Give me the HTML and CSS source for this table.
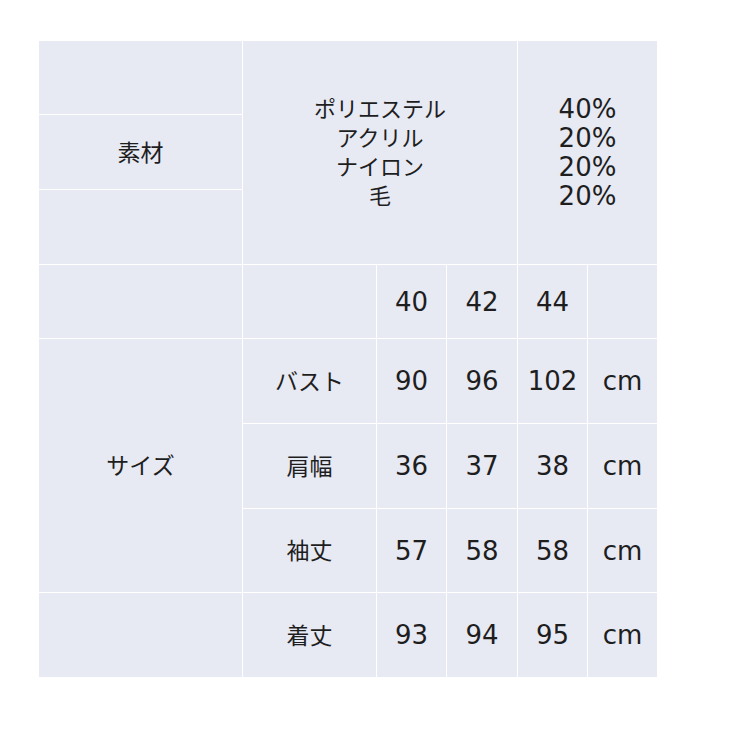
FILE: index.html
```html
<!DOCTYPE html>
<html lang="ja">
<head>
<meta charset="utf-8">
<title>素材・サイズ</title>
<link rel="stylesheet" href="styles.css">
</head>
<body>
<div class="spec">
  <div class="cell r1 c1"></div>
  <div class="cell r2 c1 jp">素材</div>
  <div class="cell r3 c1"></div>
  <div class="cell material jp">
    <span>ポリエステル</span>
    <span>アクリル</span>
    <span>ナイロン</span>
    <span>毛</span>
  </div>
  <div class="cell ratio num">
    <span>40%</span>
    <span>20%</span>
    <span>20%</span>
    <span>20%</span>
  </div>

  <div class="cell"></div>
  <div class="cell"></div>
  <div class="cell num">40</div>
  <div class="cell num">42</div>
  <div class="cell num">44</div>
  <div class="cell"></div>

  <div class="cell size jp">サイズ</div>
  <div class="cell jp">バスト</div>
  <div class="cell num">90</div>
  <div class="cell num">96</div>
  <div class="cell num">102</div>
  <div class="cell num">cm</div>

  <div class="cell jp">肩幅</div>
  <div class="cell num">36</div>
  <div class="cell num">37</div>
  <div class="cell num">38</div>
  <div class="cell num">cm</div>

  <div class="cell jp">袖丈</div>
  <div class="cell num">57</div>
  <div class="cell num">58</div>
  <div class="cell num">58</div>
  <div class="cell num">cm</div>

  <div class="cell"></div>
  <div class="cell jp">着丈</div>
  <div class="cell num">93</div>
  <div class="cell num">94</div>
  <div class="cell num">95</div>
  <div class="cell num">cm</div>
</div>
</body>
</html>
```

FILE: styles.css
```css
html, body {
  margin: 0;
  padding: 0;
  background: #ffffff;
}

body {
  padding: 41px 0 0 39px;
}

.spec {
  display: grid;
  grid-template-columns: 203px 133px 69px 70px 69px 69px;
  grid-template-rows: 73px 74px 74px 73px 84px 84px 83px 84px;
  gap: 1px;
  width: max-content;
  background: #ffffff;
  color: #1e1e1e;
}

.cell {
  background: #e7e9f3;
  display: flex;
  align-items: center;
  justify-content: center;
  text-align: center;
}

.c1 {
  grid-column: 1;
}
.r1 { grid-row: 1; }
.r2 { grid-row: 2; }
.r3 { grid-row: 3; }

.material {
  grid-column: 2 / 5;
  grid-row: 1 / 4;
  flex-direction: column;
  line-height: 29px;
}

.ratio {
  grid-column: 5 / 7;
  grid-row: 1 / 4;
  flex-direction: column;
  line-height: 29px;
}

.size {
  grid-column: 1;
  grid-row: 5 / 8;
}

.jp {
  font-family: "Noto Sans CJK JP", "DejaVu Sans", sans-serif;
  font-size: 23px;
  font-weight: 400;
  padding-bottom: 3px;
}

.material.jp {
  font-size: 22px;
  padding-bottom: 4px;
}

.num {
  font-family: "DejaVu Sans", "Noto Sans CJK JP", sans-serif;
  font-size: 26px;
}
```
